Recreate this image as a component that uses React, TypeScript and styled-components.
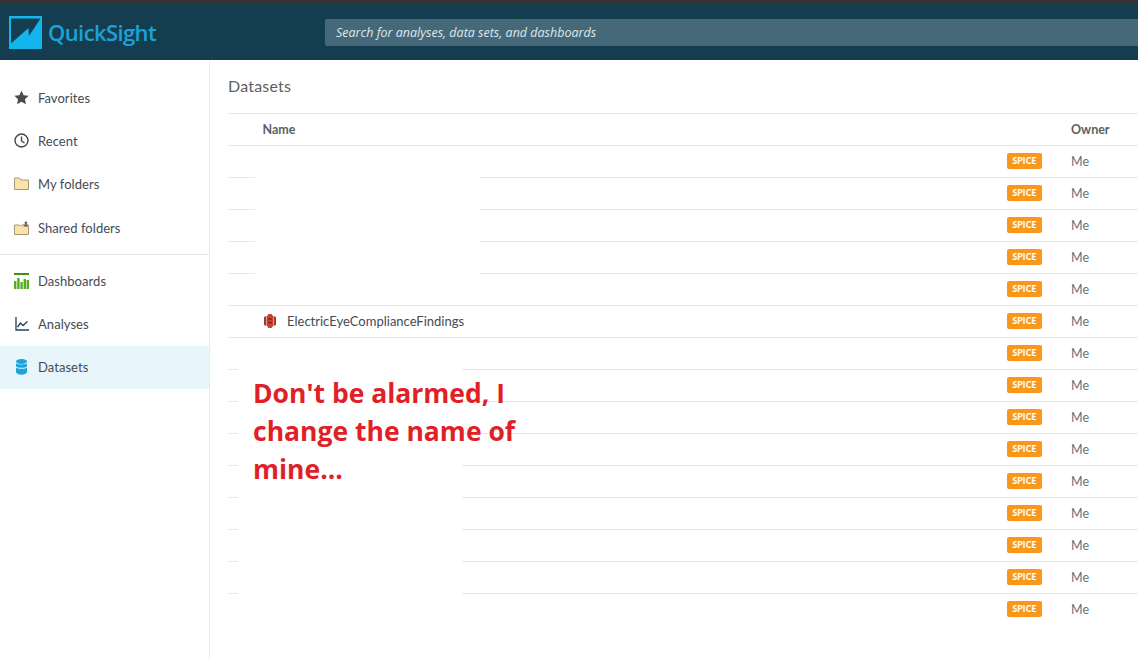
import React from "react";
import styled, { createGlobalStyle } from "styled-components";

const Global = createGlobalStyle`
  html, body { margin: 0; padding: 0; background: #fff; }
  body { font-family: Lato, "Noto Sans", sans-serif; overflow: hidden; }
`;
const Page = styled.div`
  width: 1138px; height: 659px; display: flex; flex-direction: column; overflow: hidden; position: relative;
`;
const TopStrip = styled.div`height: 4px; background: #333336; flex: none;`;
const Header = styled.header`
  height: 56px; flex: none; background: #143e50; display: flex; align-items: center;
`;
const Brand = styled.div`
  width: 325px; flex: none; display: flex; align-items: center; padding-left: 9px; box-sizing: border-box; gap: 6px;
`;
const BrandName = styled.span`
  font-family: "Open Sans", sans-serif; font-weight: 600; font-size: 22px; color: #1ba2d9; letter-spacing: -0.6px;
`;
const Search = styled.div`
  flex: 1; height: 27px; background: #46697a; border-radius: 2px 0 0 2px; display: flex; align-items: center; padding-left: 11px;
  font-family: "Open Sans", sans-serif; font-style: italic; font-size: 12.5px; color: #dfe8ec;
`;
const Body = styled.div`flex: 1; display: flex; min-height: 0;`;
const Sidebar = styled.nav`
  width: 210px; flex: none; box-sizing: border-box; border-right: 1px solid #ebebeb; padding-top: 16px;
`;
const NavItem = styled.div<{ $active?: boolean; $nudge?: boolean }>`
  height: 43px; box-sizing: border-box; display: flex; align-items: center; padding-left: 14px; gap: 9px; font-size: 13px; letter-spacing: 0.05px; color: #444b52;
  margin-top: ${(p) => (p.$active || p.$nudge ? "1px" : "0")};
  padding-bottom: ${(p) => (p.$active ? "2px" : "0")};
  background: ${(p) => (p.$active ? "#e8f5fb" : "transparent")};
`;
const NavIcon = styled.span`width: 15px; height: 16px; display: flex; align-items: center; justify-content: center; flex: none;`;
const NavDivider = styled.div`height: 1px; background: #e8e8e8; margin: 5px 0 4px;`;
const Main = styled.main`flex: 1; min-width: 0; padding-left: 18px; position: relative;`;
const Title = styled.h1`
  margin: 0; height: 53px; box-sizing: border-box; padding-top: 16px; font-size: 16px; line-height: 20px; font-weight: 400; color: #5a5f64; letter-spacing: 0.2px;
`;
const Row = styled.div`
  height: 32px; box-sizing: border-box; border-top: 1px solid #e8e8e8; padding-bottom: 1px; display: grid; grid-template-columns: 779px 64px 1fr; align-items: center; font-size: 12.5px; color: #6b7076;
`;
const HeadCell = styled.div<{ $indent?: boolean }>`
  font-weight: 700; font-size: 12.5px; color: #5b5f64; padding-left: ${(p) => (p.$indent ? "34.500px" : "0")};
`;
const NameCell = styled.div`
  display: flex; align-items: center; gap: 9px; padding-left: 34px; color: #444b52; font-size: 13px;
`;
const Badge = styled.span`
  justify-self: start; width: 35px; height: 16px; border-radius: 2px; background: #f7981c; color: #fff; font-size: 8.500px; font-weight: 900;
  display: flex; align-items: center; justify-content: center; letter-spacing: 0.2px;
`;
const Redaction = styled.div<{ $left: number; $top: number; $w: number; $h: number }>`
  position: absolute; left: ${(p) => p.$left}px; top: ${(p) => p.$top}px; width: ${(p) => p.$w}px; height: ${(p) => p.$h}px; background: #fff;
`;
const Note = styled.div`
  position: absolute; left: 253px; top: 374px; width: 290px; font-family: "Open Sans", sans-serif; font-weight: 700; font-size: 26.500px; line-height: 38px; color: #e11f26;
`;

const Logo = () => (
  <svg width="33" height="33" viewBox="0 0 33 33" style={{ flex: "none" }}>
    <rect width="33" height="33" fill="#14b4ee" />
    <path d="M2 2.500H31.500L20 20L19.500 12L2 27.500Z" fill="#143e50" />
  </svg>
);
const Star = () => (
  <svg width="15" height="15" viewBox="0 0 24 24"><path d="M12 1l3.400 7.400 8 .9-5.900 5.500 1.600 8L12 18.800 4.900 22.800l1.600-8L.6 9.300l8-.9z" fill="#4a4a4a" /></svg>
);
const Clock = () => (
  <svg width="15" height="15" viewBox="0 0 15 15" fill="none" stroke="#444" strokeWidth="1.400"><circle cx="7.500" cy="7.500" r="6.500" /><path d="M7.500 3.500V8l3 2" /></svg>
);
const Folder = () => (
  <svg width="15" height="13" viewBox="0 0 15 13"><path d="M.5 1h5l1.500 2h7.500v9.500H.5z" fill="#fbe3a8" stroke="#a89a78" /></svg>
);
const SharedFolder = () => (
  <svg width="15" height="14" viewBox="0 0 15 14"><path d="M.5 4h4.500l1.500 1L10 3l4.500 1v9.500H.5z" fill="#fbe3a8" stroke="#a89a78" /><circle cx="12" cy="1.800" r="1.200" fill="#555" /><path d="M9 5.500l2-2h2l1 2z" fill="#555" /></svg>
);
const Bars = () => (
  <svg width="15" height="16" viewBox="0 0 15 16" fill="#57ad22"><rect y="0" width="15" height="2" fill="#3f8f1a" /><rect x="0" y="8" width="2.400" height="8" /><rect x="3.200" y="5" width="2.400" height="11" /><rect x="6.400" y="9" width="2.400" height="7" /><rect x="9.600" y="6" width="2.400" height="10" /><rect x="12.600" y="7" width="2.400" height="9" /></svg>
);
const LineChart = () => (
  <svg width="14" height="14" viewBox="0 0 14 14" fill="none" stroke="#1f4159" strokeWidth="1.300"><path d="M1 0v13h13" /><path d="M2.500 10l3-4 2.500 2.500 4.500-4" /></svg>
);
const Database = () => (
  <svg width="11" height="16" viewBox="0 0 11 16" fill="#1ba3dc"><ellipse cx="5.500" cy="2.500" rx="5.500" ry="2.500" /><path d="M0 4.200c1 1.600 10 1.600 11 0v3c-1 2-10 2-11 0zM0 8.500c1 1.800 10 1.800 11 0v4.500c-1 3.500-10 3.500-11 0z" /></svg>
);
const DataIcon = () => (
  <svg width="16" height="16" viewBox="0 0 16 16" style={{ flex: "none" }}>
    <path d="M2 4l2.500-1v10L2 12zM14 4l-2.500-1v10l2.500-1z" fill="#a53a28" />
    <path d="M5 3L6.500 1h3L11 3v10l-1.500 2h-3L5 13z" fill="#c8402f" />
    <path d="M6 5.500h4v1.200H6zM6 9h4v1.200H6z" fill="#7a2418" />
  </svg>
);

const nav = [
  ["Favorites", <Star />],
  ["Recent", <Clock />],
  ["My folders", <Folder />],
  ["Shared folders", <SharedFolder />],
] as const;
const nav2 = [
  ["Dashboards", <Bars />],
  ["Analyses", <LineChart />],
  ["Datasets", <Database />],
] as const;

export default function App() {
  return (
    <Page>
      <Global />
      <TopStrip />
      <Header>
        <Brand>
          <Logo />
          <BrandName>QuickSight</BrandName>
        </Brand>
        <Search>Search for analyses, data sets, and dashboards</Search>
      </Header>
      <Body>
        <Sidebar>
          {nav.map(([label, icon]) => (
            <NavItem key={label} $nudge={label === "Shared folders"}><NavIcon>{icon}</NavIcon>{label}</NavItem>
          ))}
          <NavDivider />
          {nav2.map(([label, icon]) => (
            <NavItem key={label} $active={label === "Datasets"}><NavIcon>{icon}</NavIcon>{label}</NavItem>
          ))}
        </Sidebar>
        <Main>
          <Title>Datasets</Title>
          <Row>
            <HeadCell $indent>Name</HeadCell>
            <span />
            <HeadCell>Owner</HeadCell>
          </Row>
          {Array.from({ length: 15 }, (_, i) => (
            <Row key={i}>
              <NameCell>
                {i === 5 && (<><DataIcon />ElectricEyeComplianceFindings</>)}
              </NameCell>
              <Badge>SPICE</Badge>
              <span>Me</span>
            </Row>
          ))}
        </Main>
      </Body>
      <Redaction $left={255} $top={146} $w={224} $h={159} />
      <Redaction $left={238} $top={338} $w={224} $h={258} />
      <Note>Don't be alarmed, I change the name of mine...</Note>
    </Page>
  );
}
